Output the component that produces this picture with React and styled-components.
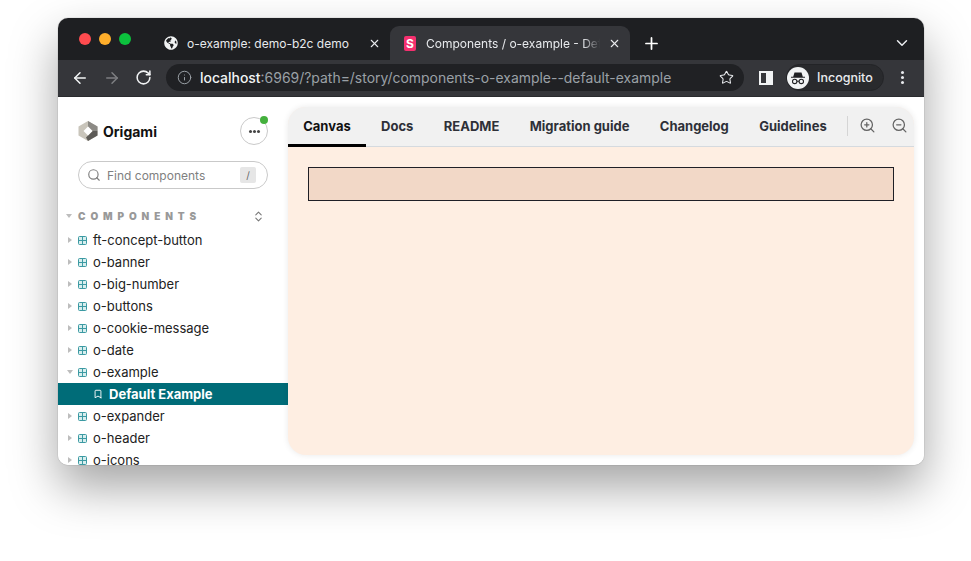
import styled, { createGlobalStyle } from 'styled-components';
import { ArrowLeft, ArrowRight, RotateCw, Info, Star, X, Plus, ChevronDown, ZoomIn, ZoomOut, Search, ChevronsUpDown, Bookmark } from 'lucide-react';
import { FaGlobeAmericas } from 'react-icons/fa';

const GlobalStyle = createGlobalStyle`
  html, body { margin: 0; padding: 0; background: #fff; }
  body { font-family: Inter, "Liberation Sans", sans-serif; overflow: hidden; }
  * { box-sizing: border-box; }
`;

const Stage = styled.div`
  width: 971px;
  height: 561px;
  padding: 18px 47px 96px 58px;
  background: #fff;
`;

const Win = styled.div`
  width: 866px;
  height: 447px;
  border-radius: 10px;
  overflow: hidden;
  background: #fff;
  display: flex;
  flex-direction: column;
  box-shadow: 0 0 1px rgba(0, 0, 0, 0.55), 0 22px 48px rgba(0, 0, 0, 0.36);
`;

const TabStrip = styled.div`
  height: 42px;
  flex: none;
  background: #1e1f22;
  display: flex;
  align-items: flex-end;
  padding-left: 20px;
`;

const Lights = styled.div`
  display: flex;
  gap: 8px;
  align-self: flex-start;
  margin: 15px 33px 0 1px;
`;

const Light = styled.span`
  width: 12px;
  height: 12px;
  border-radius: 50%;
  background: ${p => p.$c};
`;

const Tab = styled.div`
  width: ${p => p.$w}px;
  height: 34px;
  flex: none;
  display: flex;
  align-items: center;
  gap: ${p => (p.$active ? 8 : 9)}px;
  padding: 0 9px 0 ${p => p.$pad}px;
  color: #e8eaed;
  font-size: 12px;
  white-space: nowrap;
  border-radius: 9px 9px 0 0;
  background: ${p => (p.$active ? '#35363a' : 'transparent')};
`;

const TabTitle = styled.span`
  flex: 1;
  overflow: hidden;
  ${p => p.$fade && `
    -webkit-mask-image: linear-gradient(90deg, #000 90%, transparent);
    mask-image: linear-gradient(90deg, #000 90%, transparent);
  `}
`;

const SbIcon = styled.span`
  width: 12px;
  height: 15px;
  flex: none;
  margin-right: 2px;
  border-radius: 2px;
  background: #f5306f;
  color: #fff;
  font: 700 12px/15px Inter, sans-serif;
  text-align: center;
`;

const NewTab = styled.div`
  margin: 0 0 2px 12px;
  height: 30px;
  display: flex;
  align-items: center;
  color: #fff;
`;

const StripEnd = styled.div`
  margin-left: auto;
  margin-right: 13px;
  height: 30px;
  margin-bottom: 2px;
  display: flex;
  align-items: center;
  color: #e8eaed;
`;

const Toolbar = styled.div`
  height: 37px;
  flex: none;
  background: #35363a;
  display: flex;
  align-items: center;
  padding: 0 0 1px 13px;
  color: #e8eaed;
  border-bottom: 1px solid #2a2b2e;
`;

const NavBtn = styled.div`
  width: 32px;
  display: flex;
  color: ${p => (p.$off ? '#7d7e81' : '#f1f3f4')};
`;

const Omnibox = styled.div`
  width: 578px;
  height: 27px;
  margin-left: -1px;
  border-radius: 14px;
  background: #202124;
  display: flex;
  align-items: center;
  padding: 0 10px 0 11px;
  font-size: 13.95px;
  color: #9aa0a6;
`;

const Url = styled.span`
  margin-left: 8px;
  flex: 1;
  white-space: nowrap;
  b { font-weight: 500; color: #f1f3f4; }
`;

const PanelSquare = styled.span`
  width: 14px;
  height: 14px;
  margin-left: 15px;
  border: 2px solid #f1f3f4;
  border-right-width: 7px;
  background: transparent;
`;

const Incognito = styled.div`
  width: 98px;
  height: 27px;
  margin-left: 13px;
  border-radius: 14px;
  background: #292a2d;
  border: 1px solid #232427;
  display: flex;
  align-items: center;
  gap: 8px;
  padding-left: 0;
  font-size: 12.5px;
  font-weight: 500;
  color: #e8eaed;
`;

const Dots = styled.div`
  margin-left: 17px;
  display: flex;
  flex-direction: column;
  gap: 2px;
  span { width: 3px; height: 3px; border-radius: 50%; background: #e8eaed; }
`;

const Body = styled.div`
  flex: 1;
  min-height: 0;
  display: flex;
  background: #fff;
`;

const Sidebar = styled.aside`
  width: 230px;
  flex: none;
  overflow: hidden;
  padding-top: 20px;
`;

const Brand = styled.div`
  display: flex;
  align-items: center;
  height: 28px;
  padding: 0 20px;
  gap: 5px;
  font-size: 14px;
  font-weight: 700;
  color: #111;
  position: relative;
`;

const MenuBtn = styled.div`
  margin-left: auto;
  width: 28px;
  height: 28px;
  border-radius: 50%;
  border: 1px solid #c9c9c9;
  display: flex;
  align-items: center;
  justify-content: center;
  gap: 1px;
  position: relative;
  i { width: 3px; height: 3px; border-radius: 50%; background: #444; }
`;

const Badge = styled.span`
  position: absolute;
  top: -2px;
  right: -1px;
  width: 8px;
  height: 8px;
  border-radius: 50%;
  background: #44b03d;
`;

const SearchBox = styled.div`
  margin: 16px 20px 0;
  height: 28px;
  border-radius: 14px;
  border: 1px solid #c9c9c9;
  display: flex;
  align-items: center;
  padding: 0 11px 0 8px;
  gap: 6px;
  color: #7f7f7f;
  font-size: 12px;
`;

const Kbd = styled.span`
  margin-left: auto;
  width: 16px;
  height: 16px;
  background: #e6e6e6;
  border-radius: 2px;
  text-align: center;
  font-size: 10px;
  line-height: 16px;
  color: #666;
`;

const Section = styled.div`
  margin-top: 20px;
  height: 14px;
  display: flex;
  align-items: center;
  padding: 0 23px 0 8px;
  font-size: 10px;
  font-weight: 900;
  letter-spacing: 0.49em;
  color: #999;
  margin-bottom: 6px;
`;

const SectionLabel = styled.span`
  margin-left: 1px;
`;

const Caret = styled.span`
  width: 0;
  height: 0;
  flex: none;
  ${p => (p.$open
    ? `border-left: 3.5px solid transparent; border-right: 3.5px solid transparent; border-top: 4px solid #bdbdbd; margin: 0 5px 0 0;`
    : `border-top: 3.5px solid transparent; border-bottom: 3.5px solid transparent; border-left: 4px solid #bdbdbd; margin: 0 6px 0 1px;`)}
`;

const Row = styled.div`
  height: 22px;
  display: flex;
  align-items: center;
  padding-left: 9px;
  font-size: 13px;
  color: #222;
  white-space: nowrap;
`;

const StoryRow = styled.div`
  height: 22px;
  display: flex;
  align-items: center;
  gap: 6px;
  padding-left: 35px;
  background: #006c78;
  color: #fff;
  font-size: 13px;
  font-weight: 700;
`;

const Main = styled.main`
  flex: 1;
  min-width: 0;
  padding: 10px 10px 10px 0;
`;

const Preview = styled.div`
  height: 100%;
  border-radius: 18px;
  overflow: hidden;
  background: #feeee2;
  display: flex;
  flex-direction: column;
  box-shadow: 0 0 6px rgba(0, 0, 0, 0.09);
`;

const Tabs = styled.div`
  height: 40px;
  flex: none;
  background: #f1f1f1;
  border-bottom: 1px solid #d5dadf;
  display: flex;
  align-items: stretch;
`;

const TabBtn = styled.div`
  padding: 1px 15.2px 0;
  display: flex;
  align-items: center;
  font-size: 13px;
  font-weight: 700;
  white-space: nowrap;
  color: ${p => (p.$active ? '#111' : '#2e3038')};
  margin-bottom: -1px;
  border-bottom: 3px solid ${p => (p.$active ? '#000' : 'transparent')};
`;

const ToolGroup = styled.div`
  display: flex;
  align-items: center;
  gap: 15px;
  margin-left: 5px;
  color: #666;
  padding: 0 0 2px 0;
`;

const Divider = styled.span`
  width: 1px;
  height: 20px;
  background: #d5d5d5;
  margin-right: -4px;
`;

const Canvas = styled.div`
  flex: 1;
  padding: 20px;
`;

const Demo = styled.div`
  height: 34px;
  background: #f2d8c7;
  border: 1px solid #1f1f26;
`;

const components = ['ft-concept-button', 'o-banner', 'o-big-number', 'o-buttons', 'o-cookie-message', 'o-date', 'o-example'];
const belowStory = ['o-expander', 'o-header', 'o-icons'];
const tabs = ['Canvas', 'Docs', 'README', 'Migration guide', 'Changelog', 'Guidelines'];

const GridIcon = () => (
  <svg width="9" height="9" viewBox="0 0 9 9" style={{ marginRight: 6, flex: 'none' }}>
    <rect x="0.5" y="0.5" width="8" height="8" rx="1" fill="#d8eeee" stroke="#3c9aa3" />
    <path d="M4.5 0.5V8.5M0.5 4.5H8.5" stroke="#3c9aa3" />
  </svg>
);

const OrigamiLogo = () => (
  <svg width="20" height="20" viewBox="0 0 20 20">
    <path d="M10 0 19.5 5.5V14.5L10 20 .5 14.5V5.5Z" fill="#c9c5bb" />
    <path d="M10 0 19.5 5.5V10L14.5 10 10 5.5Z" fill="#8c8a85" />
    <path d="M19.5 10V14.5L10 20 8 16.5 14.5 10Z" fill="#5d5b57" />
    <path d="M10 5.5 14.5 10 10 14.5 5.5 10Z" fill="#fff" />
  </svg>
);

const IncognitoIcon = () => (
  <svg width="22" height="22" viewBox="0 0 22 22">
    <circle cx="11" cy="11" r="11" fill="#f1f3f4" />
    <path d="M7.5 5.5h7l1.3 4.2H18v1.1H4V9.7h2.2Z" fill="#202124" />
    <circle cx="7.7" cy="14.4" r="2.2" fill="none" stroke="#202124" strokeWidth="1.1" />
    <circle cx="14.3" cy="14.4" r="2.2" fill="none" stroke="#202124" strokeWidth="1.1" />
    <path d="M9.9 14.2h2.2" stroke="#202124" strokeWidth="1.1" />
  </svg>
);

const SideRow = ({ name, open }) => (
  <Row>
    <Caret $open={open} />
    <GridIcon />
    {name}
  </Row>
);

const App = () => (
  <Stage>
    <GlobalStyle />
    <Win>
      <TabStrip>
        <Lights>
          <Light $c="#ff4b4f" />
          <Light $c="#ffae2b" />
          <Light $c="#0cc13d" />
        </Lights>
        <Tab $w={226} $pad={0}>
          <FaGlobeAmericas size={14} color="#f1f3f4" />
          <TabTitle>o-example: demo-b2c demo</TabTitle>
          <X size={13} strokeWidth={2} />
        </Tab>
        <Tab $w={240} $active $pad={14}>
          <SbIcon>S</SbIcon>
          <TabTitle $fade>Components / o-example - Default Example</TabTitle>
          <X size={13} strokeWidth={2} />
        </Tab>
        <NewTab><Plus size={19} strokeWidth={2.2} /></NewTab>
        <StripEnd><ChevronDown size={18} strokeWidth={2} /></StripEnd>
      </TabStrip>
      <Toolbar>
        <NavBtn><ArrowLeft size={18} /></NavBtn>
        <NavBtn $off><ArrowRight size={18} /></NavBtn>
        <NavBtn><RotateCw size={17} strokeWidth={2.2} /></NavBtn>
        <Omnibox>
          <Info size={15} strokeWidth={1.6} />
          <Url><b>localhost</b>:6969/?path=/story/components-o-example--default-example</Url>
          <Star size={15} strokeWidth={1.7} color="#e8eaed" />
        </Omnibox>
        <PanelSquare />
        <Incognito>
          <IncognitoIcon />
          Incognito
        </Incognito>
        <Dots><span /><span /><span /></Dots>
      </Toolbar>
      <Body>
        <Sidebar>
          <Brand>
            <OrigamiLogo />
            Origami
            <MenuBtn>
              <i /><i /><i />
              <Badge />
            </MenuBtn>
          </Brand>
          <SearchBox>
            <Search size={14} strokeWidth={2} />
            Find components
            <Kbd>/</Kbd>
          </SearchBox>
          <Section>
            <Caret $open />
            <SectionLabel>COMPONENTS</SectionLabel>
            <ChevronsUpDown size={13} color="#777" style={{ marginLeft: 'auto' }} />
          </Section>
          {components.map(name => (
            <SideRow key={name} name={name} open={name === 'o-example'} />
          ))}
          <StoryRow>
            <Bookmark size={10} strokeWidth={2.2} />
            Default Example
          </StoryRow>
          {belowStory.map(name => (
            <SideRow key={name} name={name} />
          ))}
        </Sidebar>
        <Main>
          <Preview>
            <Tabs>
              {tabs.map(t => (
                <TabBtn key={t} $active={t === 'Canvas'}>{t}</TabBtn>
              ))}
              <ToolGroup>
                <Divider />
                <ZoomIn size={17} strokeWidth={1.8} />
                <ZoomOut size={17} strokeWidth={1.8} />
              </ToolGroup>
            </Tabs>
            <Canvas>
              <Demo />
            </Canvas>
          </Preview>
        </Main>
      </Body>
    </Win>
  </Stage>
);

export default App;
